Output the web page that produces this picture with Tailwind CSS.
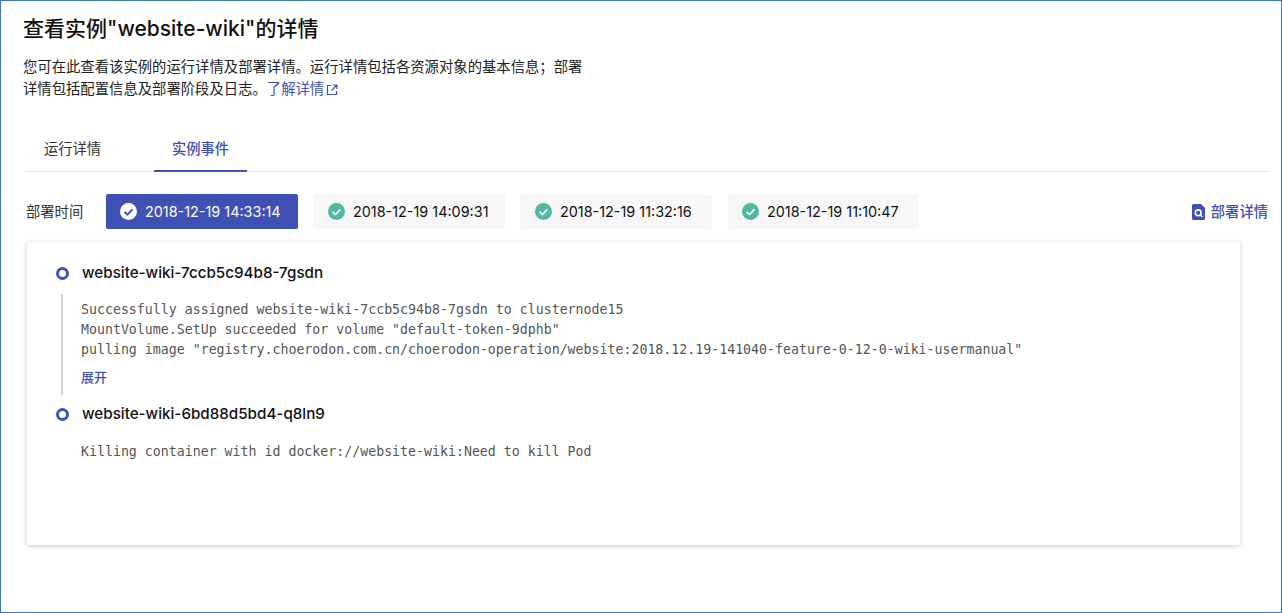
<!DOCTYPE html>
<html lang="zh-CN">
<head>
<meta charset="UTF-8">
<title>实例详情</title>
<script src="https://cdn.jsdelivr.net/npm/@tailwindcss/browser@4"></script>
</head>
<body class="bg-white overflow-hidden font-['Inter','Noto_Sans_CJK_SC',sans-serif] text-black">
<div class="w-[1282px] h-[613px] border border-[#3d74c0] pl-[22px] pr-[13px] pt-[14px]">
  <h1 class="text-[21px] leading-[28px] font-medium text-[#111]">查看实例"website-wiki"的详情</h1>
  <p class="mt-[13px] w-[600px] text-[14.35px] leading-[22px] text-[#222]">您可在此查看该实例的运行详情及部署详情。运行详情包括各资源对象的基本信息；部署<br>详情包括配置信息及部署阶段及日志。<a class="text-[#3f51b5]">了解详情<svg class="inline-block w-[12px] h-[12px] ml-[2px] align-[-2px]" viewBox="0 0 12 12" fill="none" stroke="#3f51b5" stroke-width="1.2"><path d="M5 1.5H1.5v9h9V7M7 1h4v4M11 1L5.5 6.5"/></svg></a></p>

  <div class="mt-[23px] ml-[3px] h-[49px] flex border-b border-[#e4e4e4]">
    <div class="w-[93px] text-center text-[14.3px] leading-[52px] text-[#333]">运行详情</div>
    <div class="ml-[35px] w-[93px] h-[49px] border-b-2 border-[#3f51b5] text-center text-[14.3px] font-medium leading-[52px] text-[#3f51b5]">实例事件</div>
  </div>

  <div class="mt-[22px] ml-[3px] flex items-center h-[35px]">
    <span class="w-[81px] text-[14.3px] text-[#333] mr-[-1px]">部署时间</span>
    <div class="flex gap-[15px] flex-1">
      <div class="w-[192px] h-[35px] rounded-[2px] bg-[#3f51b5] flex items-center pl-[14px] gap-[8px] text-[14.4px] text-white">
        <svg class="w-[17px] h-[17px]" viewBox="0 0 17 17"><circle cx="8.5" cy="8.5" r="8.5" fill="#fff"/><path d="M4.6 8.8l2.8 2.8 5-5.2" fill="none" stroke="#3f51b5" stroke-width="2"/></svg>
        2018-12-19 14:33:14
      </div>
      <div class="w-[192px] h-[35px] rounded-[2px] bg-[#f7f7f7] flex items-center pl-[15px] gap-[8px] text-[14.4px] text-[#111]">
        <svg class="w-[17px] h-[17px]" viewBox="0 0 17 17"><circle cx="8.5" cy="8.5" r="8.5" fill="#4fb9a3"/><path d="M4.6 8.8l2.8 2.8 5-5.2" fill="none" stroke="#fff" stroke-width="1.6"/></svg>
        2018-12-19 14:09:31
      </div>
      <div class="w-[192px] h-[35px] rounded-[2px] bg-[#f7f7f7] flex items-center pl-[15px] gap-[8px] text-[14.4px] text-[#111]">
        <svg class="w-[17px] h-[17px]" viewBox="0 0 17 17"><circle cx="8.5" cy="8.5" r="8.5" fill="#4fb9a3"/><path d="M4.6 8.8l2.8 2.8 5-5.2" fill="none" stroke="#fff" stroke-width="1.6"/></svg>
        2018-12-19 11:32:16
      </div>
      <div class="ml-[1px] w-[191px] h-[35px] rounded-[2px] bg-[#f7f7f7] flex items-center pl-[14px] gap-[8px] text-[14.4px] text-[#111]">
        <svg class="w-[17px] h-[17px]" viewBox="0 0 17 17"><circle cx="8.5" cy="8.5" r="8.5" fill="#4fb9a3"/><path d="M4.6 8.8l2.8 2.8 5-5.2" fill="none" stroke="#fff" stroke-width="1.6"/></svg>
        2018-12-19 11:10:47
      </div>
    </div>
    <div class="flex items-center gap-[6px] text-[14.3px] font-medium text-[#3f51b5]">
      <svg class="w-[13px] h-[16px]" viewBox="0 0 13 16"><path d="M1.5 0H9l4 4v10.5a1.5 1.5 0 0 1-1.5 1.5h-10A1.5 1.5 0 0 1 0 14.5v-13A1.5 1.5 0 0 1 1.5 0z" fill="#3f51b5"/><circle cx="6.2" cy="8.8" r="2.9" fill="none" stroke="#fff" stroke-width="1.6"/><path d="M8.2 10.8l2.2 2.2" stroke="#fff" stroke-width="1.6"/></svg>
      部署详情
    </div>
  </div>

  <div class="mt-[13px] ml-[4px] w-[1213px] h-[303px] rounded-[2px] bg-white shadow-[0_1px_5px_rgba(0,0,0,0.22)] pt-[21px] pl-[29px]">
    <div class="flex items-center h-[20px]">
      <span class="w-[13px] h-[13px] rounded-full border-[3px] border-[#3f51b5]"></span>
      <span class="ml-[13px] text-[15.2px] font-medium text-[#111]">website-wiki-7ccb5c94b8-7gsdn</span>
    </div>
    <div class="ml-[5px] mt-[11px] h-[101px] border-l-2 border-[#d0d0d0] pl-[18px] pt-[6px]">
      <pre class="font-['DejaVu_Sans_Mono',monospace] text-[13.25px] leading-[20px] text-[#555]">Successfully assigned website-wiki-7ccb5c94b8-7gsdn to clusternode15
MountVolume.SetUp succeeded for volume "default-token-9dphb"
pulling image "registry.choerodon.com.cn/choerodon-operation/website:2018.12.19-141040-feature-0-12-0-wiki-usermanual"</pre>
      <div class="mt-[8px] text-[13px] leading-[18px] font-medium text-[#3f51b5]">展开</div>
    </div>
    <div class="flex items-center h-[20px] mt-[9px]">
      <span class="w-[13px] h-[13px] rounded-full border-[3px] border-[#3f51b5]"></span>
      <span class="ml-[13px] text-[15.2px] font-medium text-[#111]">website-wiki-6bd88d5bd4-q8ln9</span>
    </div>
    <pre class="ml-[25px] mt-[18px] font-['DejaVu_Sans_Mono',monospace] text-[13.25px] leading-[20px] text-[#555]">Killing container with id docker://website-wiki:Need to kill Pod</pre>
  </div>
</div>
</body>
</html>
